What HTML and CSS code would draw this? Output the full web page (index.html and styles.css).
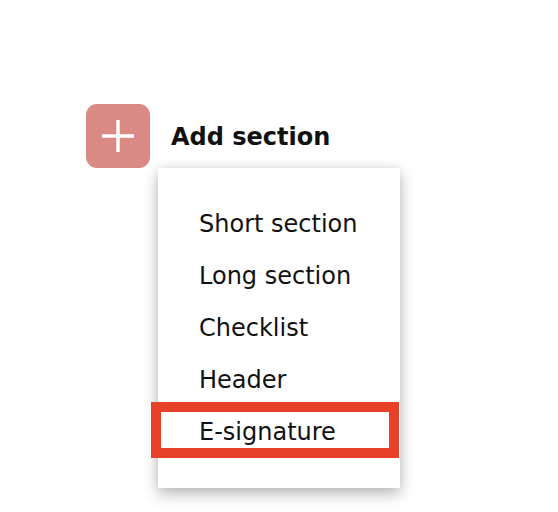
FILE: index.html
```html
<!DOCTYPE html>
<html lang="en">
<head>
<meta charset="utf-8">
<title>Add section</title>
<link rel="stylesheet" href="styles.css">
</head>
<body>
<div class="page">
  <div class="add-row">
    <button class="add-btn" aria-label="Add section">
      <svg width="32" height="32" viewBox="0 0 32 32"><path d="M16 0V32M0 16H32" stroke="#fff" stroke-width="3.4" fill="none"/></svg>
    </button>
    <span class="add-label">Add section</span>
  </div>
  <ul class="menu">
    <li class="item">Short section</li>
    <li class="item">Long section</li>
    <li class="item">Checklist</li>
    <li class="item">Header</li>
    <li class="item highlighted">E-signature</li>
  </ul>
</div>
</body>
</html>
```
FILE: styles.css
```css
* { box-sizing: border-box; }
html, body { margin: 0; padding: 0; background: #fff; }
body { font-family: "DejaVu Sans", "Open Sans", sans-serif; color: #111; }
.page { padding: 104px 0 0 86px; width: 558px; height: 512px; overflow: hidden; }
.add-row { display: flex; align-items: center; gap: 21px; height: 64px; }
.add-btn {
  width: 64px; height: 64px; border: 0; padding: 0;
  border-radius: 11px; background: #d98a85;
  display: flex; align-items: center; justify-content: center;
}
.add-label { font-size: 24px; font-weight: 700; color: #111; padding-top: 2px; }
.menu {
  list-style: none; margin: 0 0 0 72px; padding: 29px 0 31px;
  width: 242px; background: #fff;
  box-shadow: 0 6px 14px rgba(0,0,0,0.28), 0 -2px 8px rgba(0,0,0,0.06);
}
.item {
  position: relative; height: 52px; display: flex; align-items: center;
  padding: 2px 0 0 41px; font-size: 24px; color: #111;
}
.highlighted::after {
  content: ""; position: absolute;
  left: -7px; right: 1px; top: -3px; bottom: -1px;
  border: 10px solid #e8412a;
}
```
